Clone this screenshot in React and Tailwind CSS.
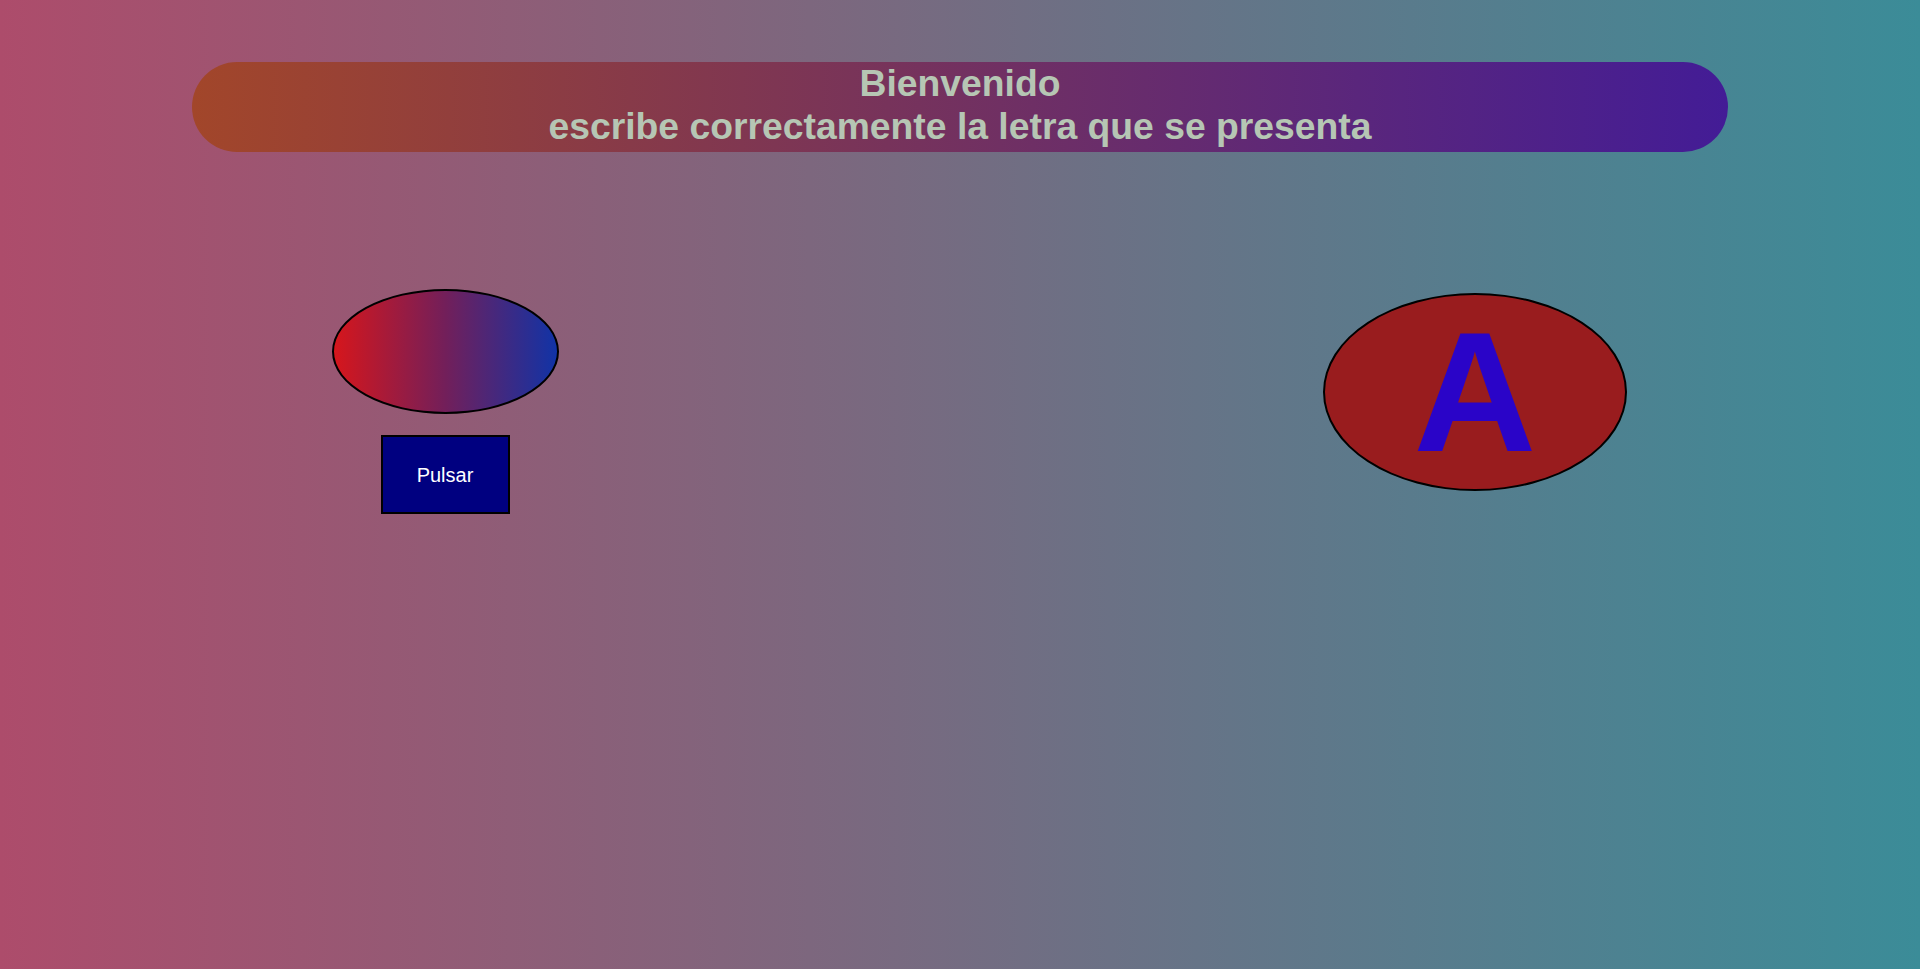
import React from 'react'

function App() {
  return (
    <div
      className="min-h-[969px] w-full bg-[linear-gradient(to_right,#ad4c6b,#3b8c98)] pt-[62px]"
      style={{ fontFamily: '"Liberation Sans", Arial, sans-serif' }}
    >
      {/* banner */}
      <div className="mx-auto flex h-[90px] w-[1536px] flex-col items-center justify-center rounded-full bg-[linear-gradient(to_right,#a2462a,#431c96)]">
        <h1 className="-mt-[4px] text-center text-[37.3px] font-bold leading-[43px] text-[#b6c6b4]">
          Bienvenido
          <br />
          escribe correctamente la letra que se presenta
        </h1>
      </div>

      <div className="mt-[137px] flex items-start justify-between">
        {/* left side */}
        <div className="flex w-[890px] flex-col items-center">
          <div className="h-[125px] w-[227px] rounded-[50%] border-2 border-black bg-[linear-gradient(to_right,#d6161c,#721f5a,#1133a6)]"></div>
          <button className="mt-[21px] flex h-[79px] w-[129px] items-center justify-center border-2 border-black bg-[#000080] text-[20px] text-white">
            Pulsar
          </button>
        </div>

        {/* right side */}
        <div className="mt-[4px] flex w-[890px] justify-center">
          <div className="flex h-[198px] w-[304px] items-center justify-center rounded-[50%] border-2 border-black bg-[#991c1e]">
            <span className="text-[170px] font-bold leading-none text-[#2a04c8]">A</span>
          </div>
        </div>
      </div>
    </div>
  )
}

export default App
